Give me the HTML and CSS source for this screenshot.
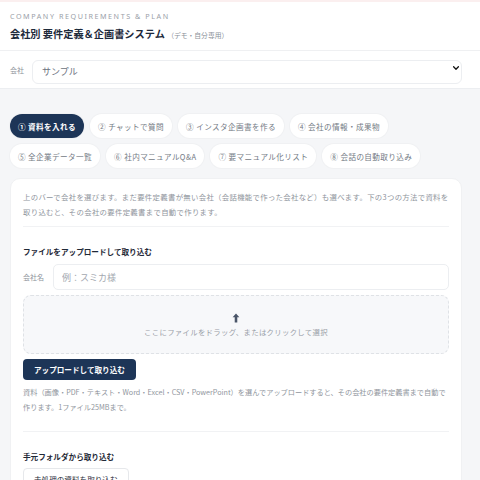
FILE: index.html
```html
<!DOCTYPE html>
<html lang="ja">
<head>
<meta charset="utf-8">
<title>会社別 要件定義＆企画書システム</title>
<link rel="stylesheet" href="styles.css">
</head>
<body>
<header class="app-header">
  <div class="eyebrow">COMPANY REQUIREMENTS &amp; PLAN</div>
  <h1 class="title">会社別 要件定義＆企画書システム <span class="title-note">（デモ・自分専用）</span></h1>
</header>

<div class="company-bar">
  <label class="company-label" for="company">会社</label>
  <div class="select-wrap">
    <select id="company" class="company-select">
      <option>サンプル</option>
    </select>
    <svg class="chevron" viewBox="0 0 10 10" width="8" height="8"><path d="M2 3.5 L5 6.5 L8 3.5" fill="none" stroke="#111" stroke-width="1.6" stroke-linecap="round" stroke-linejoin="round"/></svg>
  </div>
</div>

<main class="main">
  <nav class="tabs">
    <button class="tab active">① 資料を入れる</button>
    <button class="tab">② チャットで質問</button>
    <button class="tab">③ インスタ企画書を作る</button>
    <button class="tab">④ 会社の情報・成果物</button>
    <button class="tab">⑤ 全企業データ一覧</button>
    <button class="tab">⑥ 社内マニュアルQ&amp;A</button>
    <button class="tab">⑦ 要マニュアル化リスト</button>
    <button class="tab">⑧ 会話の自動取り込み</button>
  </nav>

  <section class="card">
    <p class="lead">上のバーで会社を選びます。まだ要件定義書が無い会社（会話機能で作った会社など）も選べます。下の3つの方法で資料を取り込むと、その会社の要件定義書まで自動で作ります。</p>
    <hr class="divider">

    <h2 class="section-title">ファイルをアップロードして取り込む</h2>
    <div class="field">
      <label class="field-label" for="cname">会社名</label>
      <input id="cname" class="text-input" type="text" placeholder="例：スミカ様">
    </div>
    <div class="dropzone">
      <svg class="drop-icon" viewBox="0 0 10 12" width="8" height="10"><path d="M5 0.5 L9.2 5.2 H6.6 V11.5 H3.4 V5.2 H0.8 Z" fill="#4a5568"/></svg>
      <div class="drop-text">ここにファイルをドラッグ、またはクリックして選択</div>
    </div>
    <button class="btn-primary">アップロードして取り込む</button>
    <p class="note">資料（画像・PDF・テキスト・Word・Excel・CSV・PowerPoint）を選んでアップロードすると、その会社の要件定義書まで自動で作ります。1ファイル25MBまで。</p>
    <hr class="divider divider-wide">

    <h2 class="section-title">手元フォルダから取り込む</h2>
    <button class="btn-outline">未処理の資料を取り込む</button>
  </section>
</main>
</body>
</html>
```
FILE: styles.css
```css
* { box-sizing: border-box; }

html, body {
  margin: 0;
  padding: 0;
}

body {
  font-family: "Noto Sans CJK JP", "Noto Sans", sans-serif;
  color: #1f2937;
  background: #f5f6f8;
  height: 480px;
  overflow: hidden;
}

.app-header {
  background: #fff;
  border-top: 2px solid #fbefef;
  border-bottom: 1px solid #eff0f2;
  padding: 8px 10px 8px;
  height: 51px;
}

.eyebrow {
  font-family: "Noto Sans", sans-serif;
  font-size: 7.2px;
  letter-spacing: 1.55px;
  color: #9aa0a8;
  line-height: 12px;
}

.title {
  margin: 4px 0 0;
  font-size: 10.2px;
  font-weight: 700;
  color: #1e2a3b;
  line-height: 16px;
}

.title-note {
  font-size: 6.8px;
  font-weight: 400;
  color: #8a9099;
}

.company-bar {
  background: #fff;
  border-bottom: 1px solid #eceef1;
  display: flex;
  align-items: center;
  gap: 8px;
  padding: 7px 18px 6px 10px;
  height: 38px;
}

.company-label {
  font-size: 7px;
  color: #8d939b;
}

.select-wrap {
  position: relative;
  flex: 1;
}

.company-select {
  appearance: none;
  width: 100%;
  height: 24px;
  border: 1px solid #eceef1;
  border-radius: 6px;
  background: #fff;
  font-family: inherit;
  font-size: 9px;
  color: #6b7280;
  padding: 0 9px;
}

.chevron {
  position: absolute;
  right: 2px;
  top: 8px;
}

.main {
  padding: 25px 18px 0 10px;
}

.tabs {
  display: flex;
  flex-wrap: wrap;
  gap: 6px;
}

.tab {
  height: 24px;
  border: none;
  border-radius: 12px;
  background: #fff;
  color: #737a84;
  font-family: inherit;
  font-size: 7.6px;
  padding: 0 8px;
  letter-spacing: 0.4px;
  box-shadow: 0 0 0 1px #f0f1f3;
}

.tab.active {
  background: #1d3557;
  color: #fff;
  font-weight: 700;
}

.card {
  margin-top: 10px;
  background: #fff;
  border-radius: 10px;
  padding: 10px 12px 20px;
  border: 1px solid #f0f1f3;
}

.lead, .note {
  margin: 0;
  font-size: 7.4px;
  line-height: 15px;
  color: #8f959d;
  letter-spacing: 0.3px;
}

.note {
  margin-top: 5px;
  font-size: 7.2px;
  letter-spacing: 0;
}

.divider {
  border: none;
  border-top: 1px solid #f1f2f4;
  margin: 7px 0 0;
}

.divider-wide {
  margin-top: 16px;
}

.section-title {
  margin: 18px 0 0;
  font-size: 7.6px;
  font-weight: 700;
  color: #1f2937;
  line-height: 14px;
}

.field {
  display: flex;
  align-items: center;
  gap: 6px;
  margin-top: 5px;
}

.field-label {
  font-size: 7px;
  color: #8d939b;
  width: 24px;
}

.text-input {
  flex: 1;
  height: 26px;
  border: 1px solid #eceef1;
  border-radius: 5px;
  font-family: inherit;
  font-size: 9px;
  padding: 0 8px;
  color: #333;
}

.text-input::placeholder {
  color: #a3a8b0;
}

.dropzone {
  margin-top: 5px;
  height: 59px;
  border: 1px dashed #dfe2e6;
  border-radius: 8px;
  background: #f7f8fa;
  display: flex;
  flex-direction: column;
  align-items: center;
  justify-content: center;
  gap: 3px;
}

.drop-text {
  font-size: 7.4px;
  color: #9aa0a8;
  letter-spacing: 0.3px;
}

.btn-primary {
  display: block;
  margin-top: 5px;
  height: 21px;
  border: none;
  border-radius: 4px;
  background: #1d3557;
  color: #fff;
  font-family: inherit;
  font-size: 7.6px;
  font-weight: 700;
  padding: 0 11px;
}

.btn-outline {
  display: block;
  margin-top: 4px;
  height: 22px;
  border: 1px solid #e6e8eb;
  border-radius: 4px;
  background: #fff;
  color: #1f2937;
  font-family: inherit;
  font-size: 7.6px;
  padding: 0 10px;
}
```
